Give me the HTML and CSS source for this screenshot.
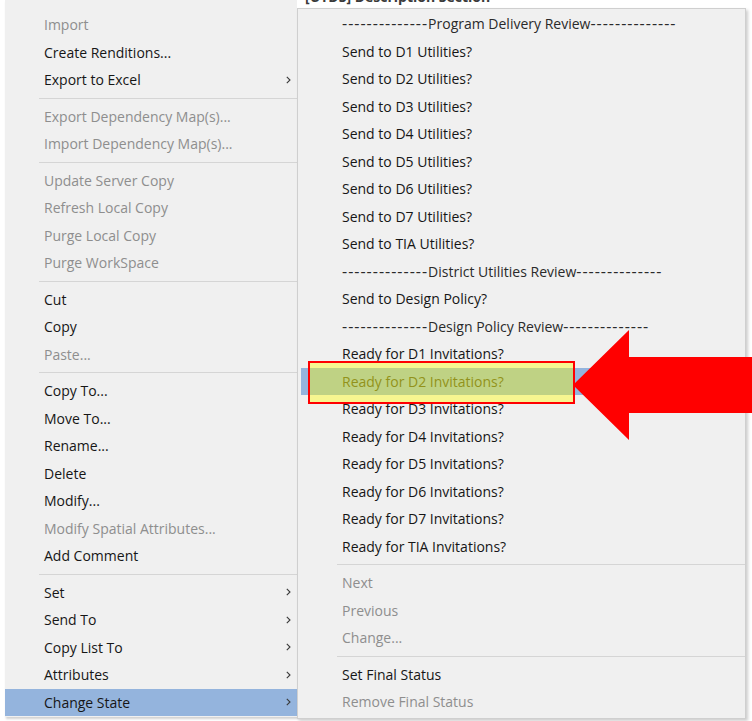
FILE: index.html
```html
<!DOCTYPE html>
<html lang="en">
<head>
<meta charset="utf-8">
<title>Change State menu</title>
<link rel="stylesheet" href="styles.css">
</head>
<body>
<div class="screen">
  <div class="menus">
    <ul class="menu main-menu">
      <li class="item disabled">Import</li>
      <li class="item">Create Renditions...</li>
      <li class="item has-sub">Export to Excel<svg class="chev" viewBox="0 0 5 8"><polyline points="0.8,0.8 4,4 0.8,7.2"/></svg></li>
      <li class="sep"></li>
      <li class="item disabled">Export Dependency Map(s)...</li>
      <li class="item disabled">Import Dependency Map(s)...</li>
      <li class="sep"></li>
      <li class="item disabled">Update Server Copy</li>
      <li class="item disabled">Refresh Local Copy</li>
      <li class="item disabled">Purge Local Copy</li>
      <li class="item disabled">Purge WorkSpace</li>
      <li class="sep"></li>
      <li class="item">Cut</li>
      <li class="item">Copy</li>
      <li class="item disabled">Paste...</li>
      <li class="sep"></li>
      <li class="item">Copy To...</li>
      <li class="item">Move To...</li>
      <li class="item">Rename...</li>
      <li class="item">Delete</li>
      <li class="item">Modify...</li>
      <li class="item disabled">Modify Spatial Attributes...</li>
      <li class="item">Add Comment</li>
      <li class="sep"></li>
      <li class="item has-sub">Set<svg class="chev" viewBox="0 0 5 8"><polyline points="0.8,0.8 4,4 0.8,7.2"/></svg></li>
      <li class="item has-sub">Send To<svg class="chev" viewBox="0 0 5 8"><polyline points="0.8,0.8 4,4 0.8,7.2"/></svg></li>
      <li class="item has-sub">Copy List To<svg class="chev" viewBox="0 0 5 8"><polyline points="0.8,0.8 4,4 0.8,7.2"/></svg></li>
      <li class="item has-sub">Attributes<svg class="chev" viewBox="0 0 5 8"><polyline points="0.8,0.8 4,4 0.8,7.2"/></svg></li>
      <li class="item has-sub active">Change State<svg class="chev" viewBox="0 0 5 8"><polyline points="0.8,0.8 4,4 0.8,7.2"/></svg></li>
    </ul>

    <div class="sub-column">
      <div class="backdrop-strip"><span class="backdrop-text">[UTDS] Description Section</span></div>
      <ul class="menu sub-menu">
        <li class="item header"><span><span class="dashes">--------------</span>Program Delivery Review<span class="dashes">--------------</span></span></li>
        <li class="item">Send to D1 Utilities?</li>
        <li class="item">Send to D2 Utilities?</li>
        <li class="item">Send to D3 Utilities?</li>
        <li class="item">Send to D4 Utilities?</li>
        <li class="item">Send to D5 Utilities?</li>
        <li class="item">Send to D6 Utilities?</li>
        <li class="item">Send to D7 Utilities?</li>
        <li class="item">Send to TIA Utilities?</li>
        <li class="item header"><span><span class="dashes">--------------</span>District Utilities Review<span class="dashes">--------------</span></span></li>
        <li class="item">Send to Design Policy?</li>
        <li class="item header"><span><span class="dashes">--------------</span>Design Policy Review<span class="dashes">--------------</span></span></li>
        <li class="item">Ready for D1 Invitations?</li>
        <li class="item active marked">Ready for D2 Invitations?</li>
        <li class="item">Ready for D3 Invitations?</li>
        <li class="item">Ready for D4 Invitations?</li>
        <li class="item">Ready for D5 Invitations?</li>
        <li class="item">Ready for D6 Invitations?</li>
        <li class="item">Ready for D7 Invitations?</li>
        <li class="item">Ready for TIA Invitations?</li>
        <li class="sep"></li>
        <li class="item disabled">Next</li>
        <li class="item disabled">Previous</li>
        <li class="item disabled">Change...</li>
        <li class="sep"></li>
        <li class="item">Set Final Status</li>
        <li class="item disabled">Remove Final Status</li>
      </ul>
    </div>
  </div>

  <!-- highlighter box and pointer arrow drawn over the menu -->
  <div class="callout-box"></div>
  <svg class="callout-arrow" viewBox="0 0 179 112" width="179" height="112">
    <path d="M0 56 L56 1 L56 28 L179 28 L179 84 L56 84 L56 111 Z" fill="#ff0000"/>
  </svg>
</div>
</body>
</html>
```

FILE: styles.css
```css
* {
  box-sizing: border-box;
}

html, body {
  margin: 0;
  padding: 0;
  background: #ffffff;
}

.screen {
  position: relative;
  width: 752px;
  height: 721px;
  overflow: hidden;
  font-family: "Open Sans", "Noto Sans", sans-serif;
  font-size: 14px;
  color: #161616;
}

.menus {
  display: flex;
  align-items: flex-start;
}

.menu {
  list-style: none;
  margin: 0;
  background: #f0f0f0;
}

.main-menu {
  margin-left: 5px;
  width: 294px;
  padding: 11px 0 1px 0;
  box-shadow: 1px 2px 2px rgba(0, 0, 0, 0.18);
}

.sub-column {
  display: flex;
  flex-direction: column;
  margin-left: -2px;
  width: 449px;
}

.backdrop-strip {
  height: 8px;
  overflow: hidden;
  background: #ffffff;
}

.backdrop-text {
  display: block;
  margin-top: -12px;
  padding-left: 8px;
  font-weight: 700;
  font-size: 14px;
  line-height: 18px;
  color: #3a3a3a;
  white-space: nowrap;
}

.sub-menu {
  border: 1px solid #cfcfcf;
  padding: 1px 3px 2px 3px;
  box-shadow: 2px 2px 3px rgba(0, 0, 0, 0.2);
}

.item {
  height: 27.5px;
  line-height: 27.5px;
  white-space: nowrap;
  display: flex;
  align-items: center;
  justify-content: space-between;
}

.main-menu .item {
  padding: 0 8px 0 39px;
}

.sub-menu .item {
  padding: 0 8px 0 41px;
}

.item.header {
  color: #2a2a2a;
}

.dashes {
  font-size: 16px;
  letter-spacing: 1px;
}

.item.disabled {
  color: #8e8e8e;
}

.item.active {
  background: #94b4dd;
}

.item.marked {
  color: #4a4a30;
}

.chev {
  width: 5px;
  height: 8px;
  fill: none;
  stroke: #3a3a3a;
  stroke-width: 1.1;
}

.sep {
  height: 9px;
  display: flex;
  align-items: center;
}

.main-menu .sep {
  margin-left: 34px;
}

.sub-menu .sep {
  margin-left: 36px;
  margin-right: -3px;
}

.sep::after {
  content: "";
  display: block;
  width: 100%;
  height: 1px;
  background: #d5d5d5;
}

.callout-box {
  position: absolute;
  left: 308px;
  top: 361px;
  width: 267px;
  height: 43px;
  border: 2px solid #ff0000;
  background: rgba(255, 255, 0, 0.4);
}

.callout-arrow {
  position: absolute;
  left: 573px;
  top: 329px;
}
```
